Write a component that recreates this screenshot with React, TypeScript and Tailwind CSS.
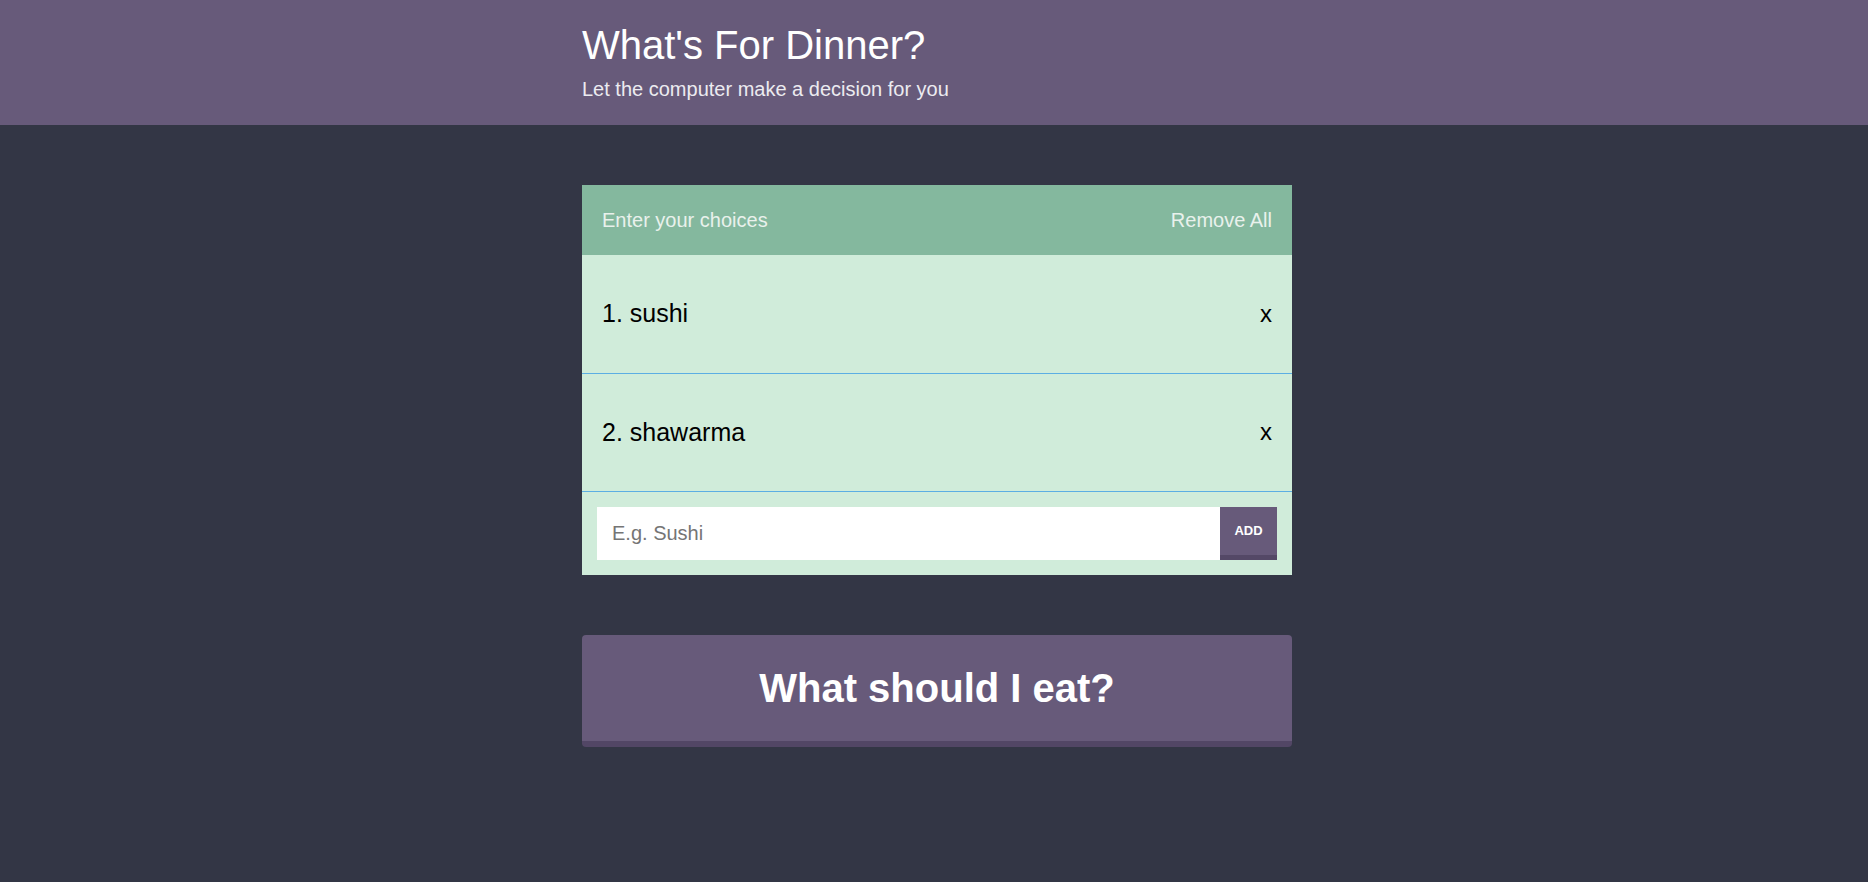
import React from "react";

export default function App() {
  const items = ["sushi", "shawarma"];
  return (
    <div className="min-h-[882px] bg-[#333645] font-['Liberation_Sans',Arial,sans-serif]">
      <header className="h-[125px] bg-[#675a7a]">
        <div className="mx-auto w-[716px] pl-[6px] pt-[25px]">
          <h1 className="text-[40px] leading-none font-normal text-white">What's For Dinner?</h1>
          <p className="mt-[14px] text-[20px] leading-none text-[#ecebf0]">Let the computer make a decision for you</p>
        </div>
      </header>
      <main className="mx-auto w-[716px] pl-[6px] pt-[60px]">
        <div className="bg-[#d0ecda]">
          <div className="flex h-[70px] items-center justify-between bg-[#84b89e] px-5 text-[20px] text-[#e9f1ec]">
            <span>Enter your choices</span>
            <button className="cursor-pointer text-[20px] text-[#e9f1ec]">Remove All</button>
          </div>
          {items.map((it, i) => (
            <div
              key={it}
              className="box-border flex h-[118.5px] items-center justify-between border-b border-[#5caee3] px-5 text-[25px] text-black"
            >
              <span>
                {i + 1}. {it}
              </span>
              <button className="cursor-pointer text-[24px] text-black">x</button>
            </div>
          ))}
          <form className="flex p-[15px]" onSubmit={(e) => e.preventDefault()}>
            <input
              className="h-[53px] flex-1 bg-white px-[15px] text-[20px] text-[#333] outline-none placeholder:text-[#757575]"
              placeholder="E.g. Sushi"
            />
            <button className="box-border h-[53px] w-[57px] border-b-[5px] border-[#544866] bg-[#675a7a] text-[13px] font-bold text-white">
              ADD
            </button>
          </form>
        </div>
        <button className="mt-[60px] box-border h-[112px] w-full rounded-[4px] border-b-[6px] border-[#524665] bg-[#675a7a] text-[40px] font-bold text-white">
          What should I eat?
        </button>
      </main>
    </div>
  );
}
